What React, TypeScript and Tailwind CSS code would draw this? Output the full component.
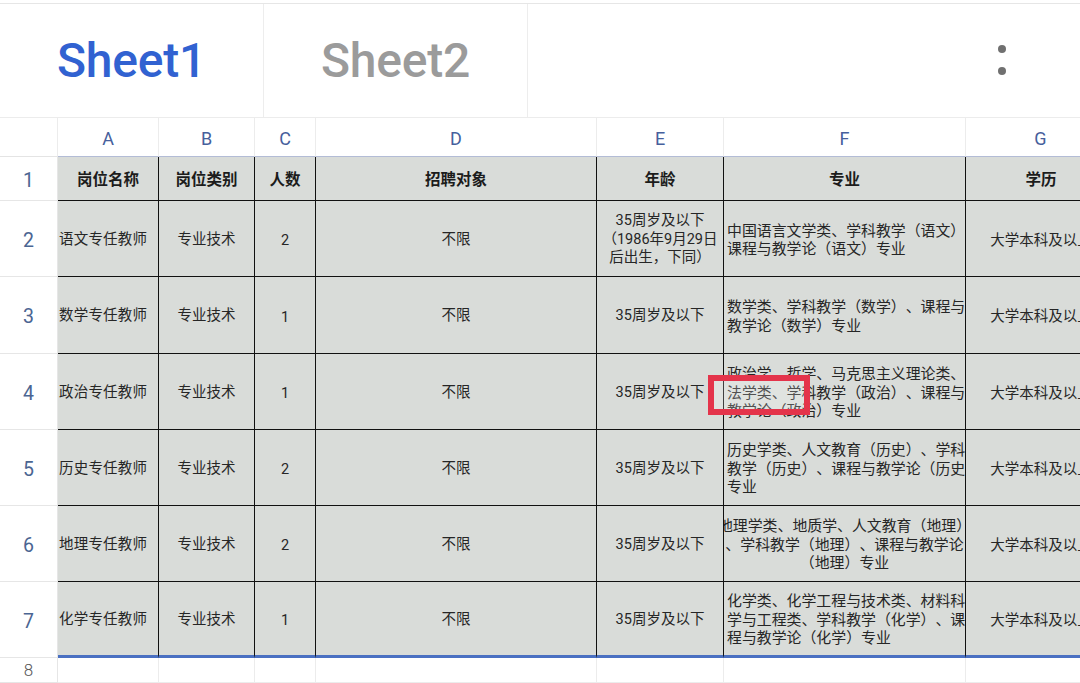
import React from "react";

type Row = {
  n: string;
  h: string;
  a: string;
  b: string;
  c: string;
  d: string;
  e: string[];
  f: string[];
  fCenter?: boolean;
  g: string;
};

const rows: Row[] = [
  {
    n: "2",
    h: "h-[76px]",
    a: "语文专任教师",
    b: "专业技术",
    c: "2",
    d: "不限",
    e: ["35周岁及以下", "（1986年9月29日", "后出生，下同）"],
    f: ["中国语言文学类、学科教学（语文）", "课程与教学论（语文）专业"],
    g: "大学本科及以上",
  },
  {
    n: "3",
    h: "h-[77px]",
    a: "数学专任教师",
    b: "专业技术",
    c: "1",
    d: "不限",
    e: ["35周岁及以下"],
    f: ["数学类、学科教学（数学）、课程与", "教学论（数学）专业"],
    g: "大学本科及以上",
  },
  {
    n: "4",
    h: "h-[76px]",
    a: "政治专任教师",
    b: "专业技术",
    c: "1",
    d: "不限",
    e: ["35周岁及以下"],
    f: ["政治学、哲学、马克思主义理论类、", "法学类、学科教学（政治）、课程与", "教学论（政治）专业"],
    g: "大学本科及以上",
  },
  {
    n: "5",
    h: "h-[76px]",
    a: "历史专任教师",
    b: "专业技术",
    c: "2",
    d: "不限",
    e: ["35周岁及以下"],
    f: ["历史学类、人文教育（历史）、学科", "教学（历史）、课程与教学论（历史", "专业"],
    g: "大学本科及以上",
  },
  {
    n: "6",
    h: "h-[76px]",
    a: "地理专任教师",
    b: "专业技术",
    c: "2",
    d: "不限",
    e: ["35周岁及以下"],
    f: ["地理学类、地质学、人文教育（地理）", "、学科教学（地理）、课程与教学论", "（地理）专业"],
    fCenter: true,
    g: "大学本科及以上",
  },
  {
    n: "7",
    h: "h-[76px]",
    a: "化学专任教师",
    b: "专业技术",
    c: "1",
    d: "不限",
    e: ["35周岁及以下"],
    f: ["化学类、化学工程与技术类、材料科", "学与工程类、学科教学（化学）、课", "程与教学论（化学）专业"],
    g: "大学本科及以上",
  },
];

const cell =
  "bg-[#d9dcd9] border-r border-b border-[#111] flex items-center overflow-hidden text-[14.5px] text-[#262626] leading-[18.5px] pt-[3px] [text-spacing-trim:space-all]";

export default function App() {
  return (
    <div className="relative w-[1080px] h-[683px] overflow-hidden bg-white font-['Roboto','Noto_Sans_CJK_SC',sans-serif]">
      {/* sheet tabs */}
      <div className="h-[117px] flex flex-col">
        <div className="h-[3px] bg-white" />
        <div className="h-px bg-[#e6e6e6]" />
        <div className="flex-1 flex">
          <div className="w-[264px] border-r border-[#ededed] flex items-center justify-center pt-px">
            <span className="text-[48px] font-medium text-[#3162d1] tracking-[-0.2px]">Sheet1</span>
          </div>
          <div className="w-[264px] border-r border-[#ededed] flex items-center justify-center pt-px">
            <span className="text-[48px] font-medium text-[#9b9b9b] tracking-[-0.2px]">Sheet2</span>
          </div>
          <div className="flex-1 flex items-center justify-end pr-[74px] pb-px">
            <div className="flex flex-col gap-[14px]">
              <div className="w-[8px] h-[8px] rounded-full bg-[#707070]" />
              <div className="w-[8px] h-[8px] rounded-full bg-[#707070]" />
            </div>
          </div>
        </div>
      </div>

      {/* grid */}
      <div className="w-[1116px] grid grid-cols-[58px_101px_96px_61px_281px_127px_242px_150px]">
        {/* column header */}
        <div className="h-[40px] border-t border-r border-b border-t-[#ececec] border-r-[#ececec] border-b-[#e4e4e4] bg-white" />
        {["A", "B", "C", "D", "E", "F", "G"].map((l) => (
          <div
            key={l}
            className="h-[40px] border-t border-t-[#ececec] border-r border-r-[#ececec] border-b border-b-[#b3bcd6] bg-white flex items-center justify-center pt-[2px] text-[18px] text-[#46609c]"
          >
            {l}
          </div>
        ))}

        {/* row 1 */}
        <div className="h-[44px] border-r border-b border-[#e6e6e6] bg-white flex items-center justify-center pt-[4px] text-[19.5px] text-[#4b6592]">
          1
        </div>
        {["岗位名称", "岗位类别", "人数", "招聘对象", "年龄", "专业", "学历"].map((t, i) => (
          <div
            key={t}
            className={`h-[44px] bg-[#d9dcd9] border-b border-[#111] ${i < 6 ? "border-r" : ""} flex items-center justify-center pt-[4px] text-[15.5px] font-bold text-[#1c1c1c]`}
          >
            {t}
          </div>
        ))}

        {rows.map((r, idx) => {
          const last = idx === rows.length - 1;
          const bb = last ? "border-b-[3px] border-b-[#4a70c2]" : "";
          return (
            <React.Fragment key={r.n}>
              <div
                className={`${r.h} border-r border-b border-[#e6e6e6] bg-white flex items-center justify-center pt-[4px] text-[19.5px] text-[#4b6592]`}
              >
                {r.n}
              </div>
              <div className={`${r.h} ${cell} ${bb} justify-start pl-px whitespace-nowrap tracking-[0.2px]`}>{r.a}</div>
              <div className={`${r.h} ${cell} ${bb} justify-center`}>{r.b}</div>
              <div className={`${r.h} ${cell} ${bb} justify-center pt-[6px]`}>{r.c}</div>
              <div className={`${r.h} ${cell} ${bb} justify-center`}>{r.d}</div>
              <div className={`${r.h} ${cell} ${bb} flex-col justify-center items-center`}>
                {r.e.map((t) => (
                  <div key={t} className="whitespace-nowrap">
                    {t}
                  </div>
                ))}
              </div>
              <div
                className={`${r.h} ${cell} ${bb} text-[14.9px] flex-col justify-center ${r.fCenter ? "items-center" : "items-start pl-[3px]"}`}
              >
                {r.f.map((t) => (
                  <div key={t} className="whitespace-nowrap">
                    {t}
                  </div>
                ))}
              </div>
              <div className={`${r.h} ${cell} ${bb} border-r-0 justify-center whitespace-nowrap pt-[5px]`}>{r.g}</div>
            </React.Fragment>
          );
        })}

        {/* row 8 */}
        <div className="h-[25px] border-r border-b border-[#e6e6e6] bg-white flex items-center justify-center text-[17px] text-[#555] font-light pt-[2px]">
          8
        </div>
        {[0, 1, 2, 3, 4, 5, 6].map((i) => (
          <div key={i} className="h-[25px] border-r border-b border-[#ececec] bg-white" />
        ))}
        {[0, 1, 2, 3, 4, 5, 6, 7].map((i) => (
          <div key={"x" + i} className="h-[25px] border-r border-[#ececec] bg-white" />
        ))}
      </div>

      {/* red highlight */}
      <div className="absolute left-[708px] top-[375px] w-[102px] h-[40px] border-[6px] border-[#e4344b] bg-white/20" />
    </div>
  );
}
